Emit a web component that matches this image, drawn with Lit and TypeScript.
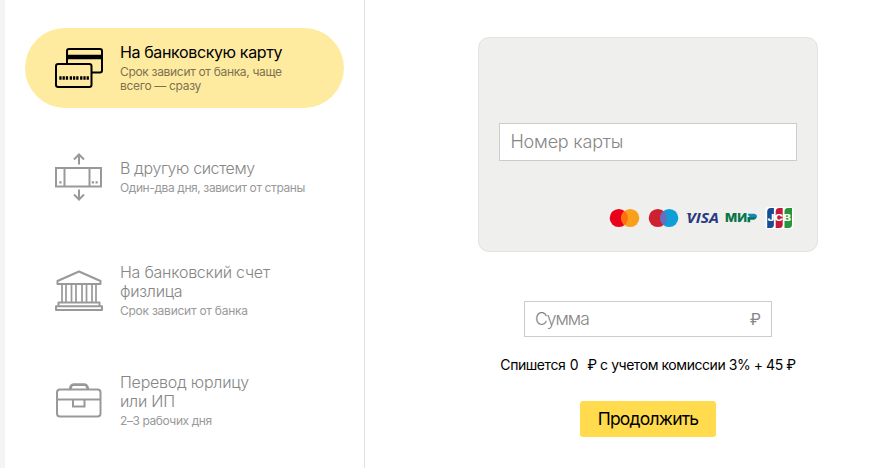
import { LitElement, html, css, svg } from "lit";
import { customElement } from "lit/decorators.js";
import { classMap } from "lit/directives/class-map.js";

const icons = {
  cards: svg`
    <path d="M17 24V12a2 2 0 0 1 2-2h31a2 2 0 0 1 2 2v19.500a2 2 0 0 1-2 2h-8"/>
    <path d="M17 18h35" stroke-width="4.500"/>
    <rect x="6" y="25" width="35.500" height="23" rx="2.200"/>
    <path d="M9.300 39h8.800M19.700 39h8.800M30.100 39h8.800" stroke-width="3.600" stroke-dasharray="2.300 0.950"/>`,
  system: svg`
    <rect x="6" y="20" width="45" height="18.500"/>
    <path d="M14.500 20v18.500M39.500 20v18.500"/>
    <path d="M29 16.500V6.800M24 11.500l5-5 5 5M29 41.500v9.800M24 46.500l5 5 5-5"/>
    <path d="M9.300 34.300h2.200M41.800 34.300h2.200M45.500 34.300h2.200" stroke-width="2.200"/>`,
  bank: svg`
    <path d="M7.500 23v-3L29 10.500 50.500 20v3z" stroke-linejoin="round"/>
    <path d="M12 23.500v17.500M16 23.500v17.500M21.500 23.500v17.500M26 23.500v17.500M32 23.500v17.500M36.500 23.500v17.500M42 23.500v17.500M46 23.500v17.500" stroke-width="1.700"/>
    <path d="M8.500 45v-3.500h41v3.500M6 45.300h46v3.700H6z" stroke-linejoin="round"/>`,
  bag: svg`
    <rect x="7" y="18.500" width="43.500" height="27" rx="3"/>
    <path d="M7 28.500h44M23 29v6.500h11.500V29"/>
    <path d="M20 18.500l1-3.200a2.500 2.500 0 0 1 2.300-1.600h11.400a2.500 2.500 0 0 1 2.300 1.600l1 3.200" stroke-width="2.800"/>`,
};

const methods = [
  { key: "to-card", icon: icons.cards, title: ["На банковскую карту"], note: ["Срок зависит от банка, чаще", "всего — сразу"] },
  { key: "to-system", icon: icons.system, title: ["В другую систему"], note: ["Один-два дня, зависит от страны"] },
  { key: "to-account", icon: icons.bank, title: ["На банковский счет", "физлица"], note: ["Срок зависит от банка"] },
  { key: "to-legal", icon: icons.bag, title: ["Перевод юрлицу", "или ИП"], note: ["2–3 рабочих дня"] },
];

@customElement("app-root")
export class AppRoot extends LitElement {
  static styles = css`
    :host {
      display: flex;
      box-sizing: border-box;
      height: 468px;
      background: #fff;
      border-left: 5px solid #f4f4f4;
      overflow: hidden;
      font-family: Inter, "Liberation Sans", sans-serif;
      font-weight: 400;
      color: #000;
    }
    * { box-sizing: border-box; }
    .methods {
      flex: none;
      width: 360px;
      padding: 28px 20px 0;
      border-right: 1px solid #e2e2e2;
    }
    .method {
      display: flex;
      align-items: center;
      height: 80px;
      width: 319px;
      padding-left: 25px;
      border-radius: 40px;
      color: #999;
    }
    .to-system { margin-top: 29px; }
    .to-account { margin-top: 33px; }
    .to-legal { margin-top: 30px; }
    .icon { flex: none; width: 58px; height: 58px; margin-right: 12px; fill: none; stroke: currentColor; stroke-width: 2; }
    .title { font-size: 16px; line-height: 19px; white-space: nowrap; font-weight: 300; color: #868686; letter-spacing: -0.24px; }
    .note { font-size: 12px; line-height: 14px; white-space: nowrap; margin-top: 3px; letter-spacing: -0.32px; }
    .to-system .title { letter-spacing: -0.4px; }
    .to-system .note { letter-spacing: -0.4px; }
    .to-account .note { letter-spacing: -0.25px; }
    .to-legal .note { letter-spacing: -0.42px; }
    .active { background: #ffeba0; color: #000; }
    .active .title { color: #000; font-weight: 400; letter-spacing: -0.37px; }
    .active .note { color: #7c7250; }
    .line { display: block; }
    .payment {
      flex: 1;
      display: flex;
      flex-direction: column;
      align-items: center;
      padding: 37px 0 0 51px;
    }
    .card {
      width: 340px;
      height: 215px;
      border: 1px solid #e2e2e0;
      border-radius: 11px;
      background: #efefed;
      padding: 85px 20px 0;
    }
    .field {
      display: flex;
      justify-content: space-between;
      align-items: center;
      border: 1px solid #ccc;
      background: #fff;
      color: #868686;
      font-size: 18px;
      font-weight: 300;
      letter-spacing: -0.2px;
    }
    .number { height: 38px; padding: 0 10.500px 1px; }
    .sum { width: 248px; height: 36px; margin-top: 49px; padding: 0 10px 1px; font-size: 17.5px; letter-spacing: -1px; }
    .ruble { font-size: 16px; font-weight: 400; letter-spacing: 0; }
    .logos { display: block; width: 190px; height: 24px; margin: 45px 0 0 107px; }
    .summary { margin-top: 18px; font-size: 14px; line-height: 19px; white-space: pre; letter-spacing: -0.44px; }
    .zero { margin: 0 2px 0 1px; }
    .submit {
      width: 136px;
      height: 36px;
      margin-top: 27px;
      padding: 0 0 1px;
      border: 0;
      border-radius: 3px;
      background: #ffdb4d;
      color: #000;
      font: inherit;
      font-size: 17.5px;
      letter-spacing: -0.78px;
    }
  `;

  logos() {
    return html`<svg class="logos" viewBox="0 0 190 24">
      <circle cx="12.800" cy="12" r="9.100" fill="#eb001b"/>
      <circle cx="24.200" cy="12" r="9.100" fill="#f99f1b"/>
      <path d="M18.500 4.900a9.100 9.100 0 0 1 0 14.200a9.100 9.100 0 0 1 0-14.200" fill="#ff6f0c"/>
      <circle cx="51.800" cy="12" r="9.100" fill="#cf2030"/>
      <circle cx="63.200" cy="12" r="9.100" fill="#0f9ed8"/>
      <path d="M57.500 4.900a9.100 9.100 0 0 1 0 14.200a9.100 9.100 0 0 1 0-14.200" fill="#6c6bbd"/>
      <path d="M80 7h4.500l1.200 2.500z" fill="#283a80"/>
      <text x="80.500" y="16.800" textLength="32.500" lengthAdjust="spacingAndGlyphs" font-family="Open Sans" font-weight="700" font-style="italic" font-size="13.500" fill="#283a80">VISA</text>
      <text x="119" y="16" textLength="22" lengthAdjust="spacingAndGlyphs" font-family="Inter" font-weight="800" font-size="11.500" fill="#0a7548">МИ</text>
      <path d="M141.500 11h9.200c-.6 1.900-2 2.800-3.800 2.800h-2.700V16.200h-2.700z" fill="#0a7548"/>
      <path d="M141.800 7.700h6c2.200 0 3.500 1.400 3.100 3.600h-5.800c-1.600 0-2.800-1.400-3.300-3.600z" fill="#1784c6"/>
      <rect x="159.500" y="1" width="28" height="22" rx="3" fill="#fff"/>
      <path d="M164.700 2h3.200v16.500a3.500 3.500 0 0 1-3.500 3.500h-3.200V5.500a3.500 3.500 0 0 1 3.500-3.500z" fill="#194d91"/>
      <path d="M173.200 2h3.500v16.500a3.500 3.500 0 0 1-3.500 3.500h-3.500V5.500a3.500 3.500 0 0 1 3.500-3.500z" fill="#c51a3a"/>
      <path d="M182 2h4v16.500a3.500 3.500 0 0 1-3.500 3.500h-4V5.500a3.500 3.500 0 0 1 3.500-3.500z" fill="#25963c"/>
      <text x="161.500" y="15.300" textLength="23.500" lengthAdjust="spacingAndGlyphs" font-family="Inter" font-weight="800" font-size="8.500" fill="#fff">JCB</text>
    </svg>`;
  }

  render() {
    return html`
      <nav class="methods">
        ${methods.map((m, i) => html`
          <div class=${classMap({ method: true, [m.key]: true, active: i === 0 })}>
            <svg class="icon" viewBox="0 0 58 58">${m.icon}</svg>
            <div>
              <div class="title">${m.title.map((t) => html`<span class="line">${t}</span>`)}</div>
              <div class="note">${m.note.map((t) => html`<span class="line">${t}</span>`)}</div>
            </div>
          </div>`)}
      </nav>
      <main class="payment">
        <section class="card">
          <div class="field number"><span class="hint">Номер карты</span></div>
          ${this.logos()}
        </section>
        <div class="field sum"><span class="hint">Сумма</span><span class="ruble">₽</span></div>
        <div class="summary">Спишется <span class="zero">0</span>  ₽ с учетом комиссии 3% + 45 ₽</div>
        <button class="submit"><span>Продолжить</span></button>
      </main>`;
  }
}
